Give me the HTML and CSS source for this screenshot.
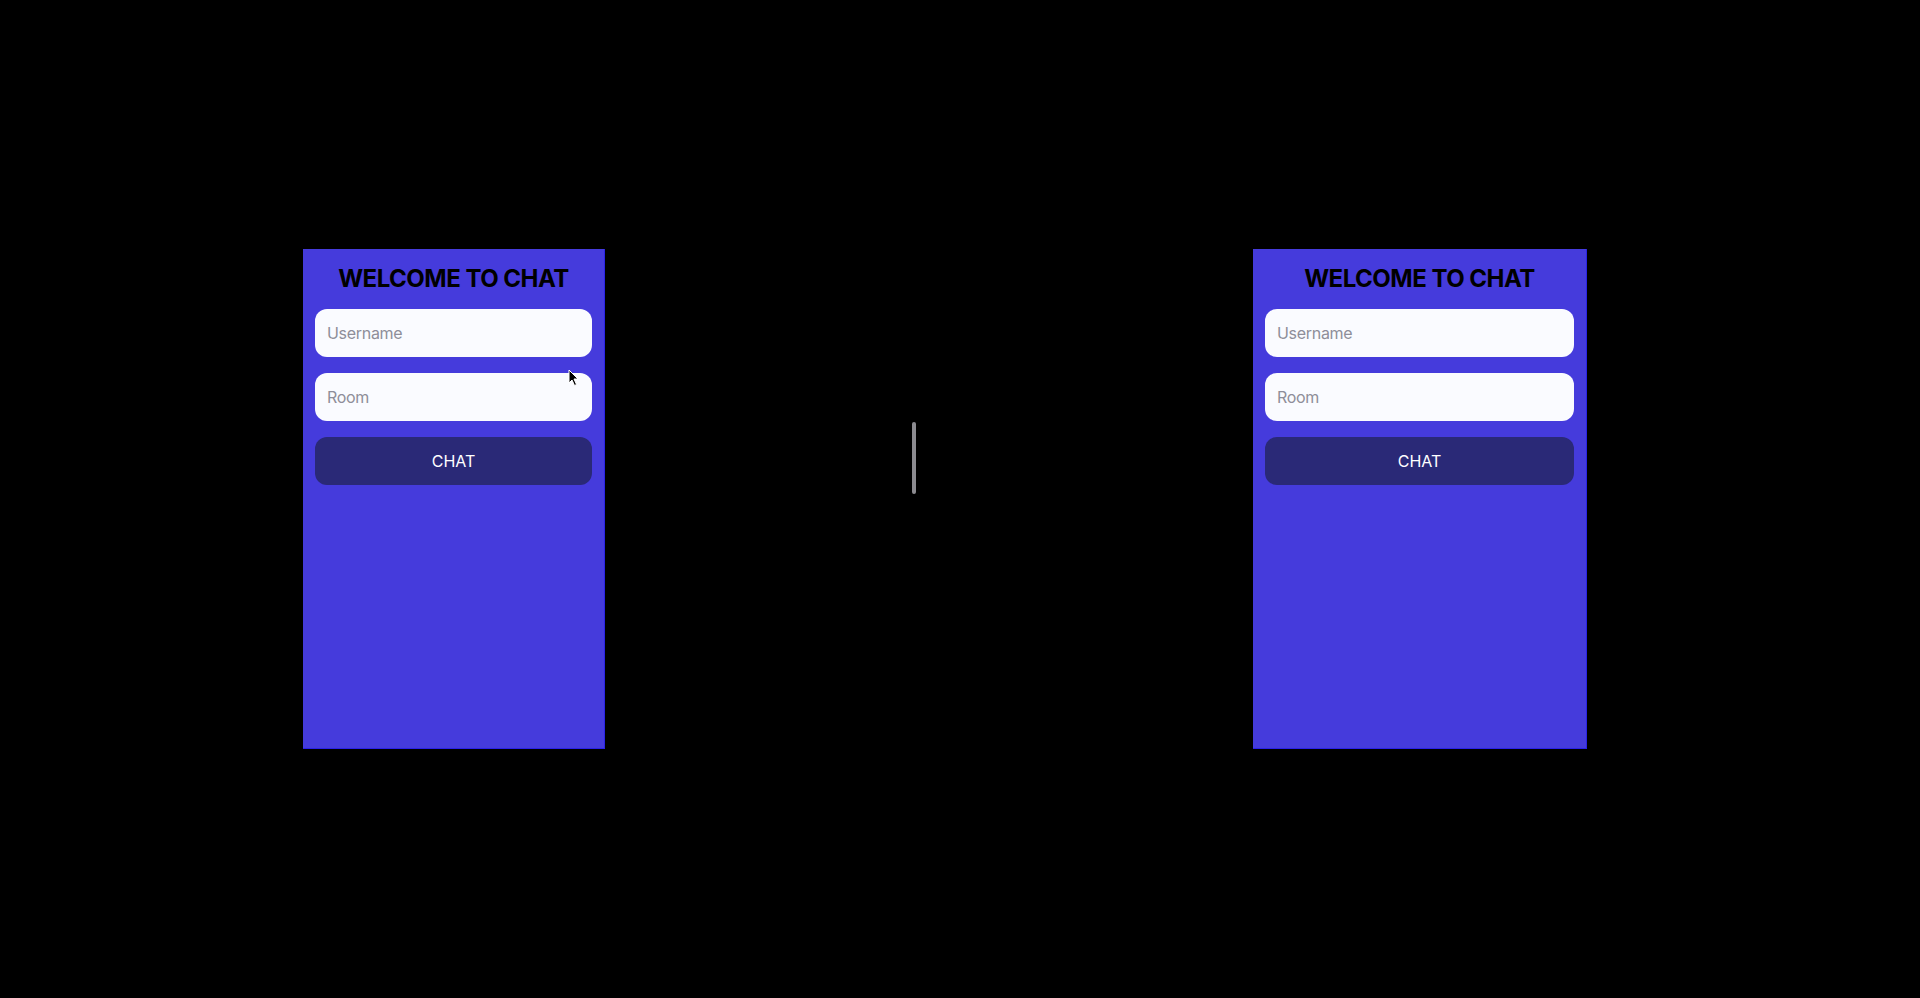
FILE: index.html
```html
<!DOCTYPE html>
<html>
<head>
<meta charset="utf-8">
<link rel="stylesheet" href="styles.css">
</head>
<body>
<div class="stage">
  <div class="panel panel-left">
    <h1 class="title">WELCOME TO CHAT</h1>
    <div class="field"><span class="ph">Username</span></div>
    <div class="field"><span class="ph">Room</span></div>
    <div class="btn">CHAT</div>
    <svg class="cursor" width="12" height="18" viewBox="0 0 12 18"><path d="M1 1 L1 14 L4 11 L6.5 16.5 L8.5 15.5 L6 10 L10 10 Z" fill="#000" stroke="#fff" stroke-width="1"/></svg>
  </div>
  <div class="divider"></div>
  <div class="panel panel-right">
    <h1 class="title">WELCOME TO CHAT</h1>
    <div class="field"><span class="ph">Username</span></div>
    <div class="field"><span class="ph">Room</span></div>
    <div class="btn">CHAT</div>
  </div>
</div>
</body>
</html>
```
FILE: styles.css
```css
html, body {
  margin: 0;
  padding: 0;
  background: #000;
  height: 998px;
  overflow: hidden;
  font-family: Inter, "Liberation Sans", sans-serif;
}
.stage {
  display: flex;
  align-items: flex-start;
  padding-top: 249px;
  padding-left: 303px;
}
.panel {
  position: relative;
  box-sizing: border-box;
  height: 500px;
  background: #453bdc;
  padding: 0 12px;
  display: flex;
  flex-direction: column;
  gap: 16px;
  border-bottom: 1px solid #2b22e6;
  border-right: 1px solid #2b22e6;
}
.panel-left { width: 302px; }
.panel-right { width: 334px; }
.title {
  margin: 16px 0 0 0;
  text-align: center;
  font-size: 24px;
  font-weight: 700;
  color: #000;
  line-height: 28px;
  letter-spacing: -0.5px;
}
.field {
  height: 48px;
  border-radius: 12px;
  background: #fafbff;
  display: flex;
  align-items: center;
  padding: 0 12px;
}
.ph {
  color: #8e8e99;
  font-size: 16px;
  letter-spacing: -0.3px;
}
.btn {
  height: 48px;
  border-radius: 12px;
  background: #2a2977;
  color: #fff;
  display: flex;
  align-items: center;
  justify-content: center;
  font-size: 16px;
  font-weight: 400;
}
.divider {
  width: 4px;
  height: 72px;
  border-radius: 2px;
  background: #8c8b90;
  margin: 173px 337px 0 307px;
}
.cursor {
  position: absolute;
  left: 265px;
  top: 120px;
}
```
